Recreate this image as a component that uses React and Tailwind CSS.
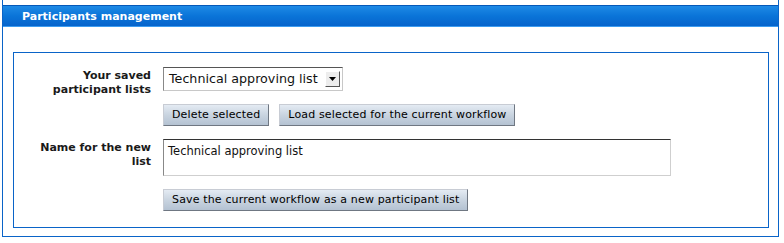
export default function App() {
  const verdana = { fontFamily: '"DejaVu Sans", Verdana, sans-serif' };
  const btn =
    "h-[22px] px-[8px] text-[11px] tracking-[0.15px] text-black border border-t-[#c8ccd4] border-l-[#c8ccd4] border-r-[#6f7782] border-b-[#6f7782] bg-[linear-gradient(#e4ebf3,#c9d4e0_50%,#b4c2d2)] leading-[20px] whitespace-nowrap";
  return (
    <div className="w-[784px] h-[243px] bg-white" style={verdana}>
      <div className="ml-[2px] w-[777px] h-[237px] border-x border-b border-[#0a64c8] pt-[5px] flex flex-col">
        <div className="h-[22px] border-t border-t-[#0558b8] border-b border-b-[#3d9cf0] bg-[linear-gradient(#1e8ae6,#0a74d8_50%,#0664cc)] flex items-center pl-[19px]">
          <span className="text-white font-bold text-[11px] leading-none">Participants management</span>
        </div>
        <div className="mt-[25px] ml-[10px] w-[756px] h-[176px] border border-[#0a64c8] pt-[14px] grid grid-cols-[137px_1fr] grid-rows-[24px_22px_37px_22px] gap-x-[12px] gap-y-[13px] content-start">
          <div className="text-right font-bold text-[11px] leading-[14px] text-[#1a1a1a] pt-[2px] whitespace-nowrap">
            Your saved
            <br />
            participant lists
          </div>
          <div>
            <div className="w-[180px] h-[24px] border border-t-[#555] border-l-[#888] border-r-[#c8c8c8] border-b-[#c8c8c8] bg-white flex items-center justify-between pl-[5px] pr-[2px]">
              <span className="text-[12.7px] text-[#111]" style={{ fontFamily: '"DejaVu Sans", sans-serif' }}>
                Technical approving list
              </span>
              <span className="w-[15px] h-[16px] bg-[#ededed] border border-t-white border-l-white border-r-[#555] border-b-[#555] flex items-center justify-center">
                <svg width="7" height="4" viewBox="0 0 7 4">
                  <polygon points="0,0 7,0 3.5,4" fill="#000" />
                </svg>
              </span>
            </div>
          </div>
          <div />
          <div className="flex gap-[10px]">
            <button className={btn}>Delete selected</button>
            <button className={btn}>Load selected for the current workflow</button>
          </div>
          <div className="text-right font-bold text-[11px] leading-[14px] text-[#1a1a1a] pt-[2px] whitespace-nowrap">
            Name for the new
            <br />
            list
          </div>
          <div>
            <div className="w-[508px] h-[37px] border border-t-[#333] border-l-[#888] border-r-[#cfcfcf] border-b-[#cfcfcf] px-[4px] pt-[3px] text-[11.5px] text-[#111]">
              Technical approving list
            </div>
          </div>
          <div />
          <div className="flex">
            <button className={btn}>Save the current workflow as a new participant list</button>
          </div>
        </div>
      </div>
    </div>
  );
}
